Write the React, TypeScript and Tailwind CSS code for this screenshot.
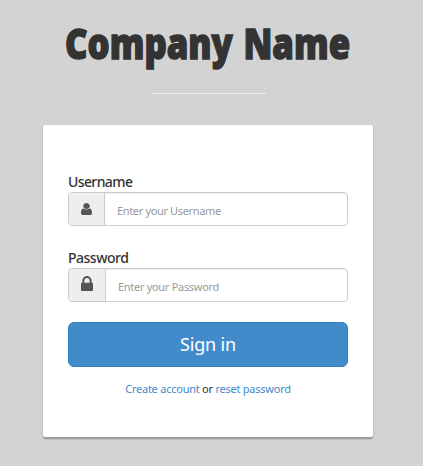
import type { ReactNode } from "react";

function UserIcon() {
  return (
    <svg className="h-[12px] w-[11px]" viewBox="256 128 1280 1536" preserveAspectRatio="none" fill="currentColor">
      <path d="M1536 1399q0 109-62.500 187t-150.500 78h-854q-88 0-150.500-78t-62.500-187q0-85 8.500-160.500t31.500-152 58.500-131 94-89 134.500-34.500q131 128 313 128t313-128q76 0 134.500 34.500t94 89 58.500 131 31.500 152 8.500 160.500zm-256-887q0 159-112.500 271.500t-271.500 112.500-271.500-112.500-112.500-271.500 112.500-271.500 271.500-112.500 271.500 112.500 112.500 271.500z" />
    </svg>
  );
}

function LockIcon() {
  return (
    <svg className="h-[15px] w-[12px]" viewBox="0 128 1152 1408" preserveAspectRatio="none" fill="currentColor">
      <path d="M320 768h512v-192q0-106-75-181t-181-75-181 75-75 181v192zm832 96v576q0 40-28 68t-68 28h-960q-40 0-68-28t-28-68v-576q0-40 28-68t68-28h32v-192q0-184 132-316t316-132 316 132 132 316v192h32q40 0 68 28t28 68z" />
    </svg>
  );
}

type FieldProps = {
  label: string;
  labelClass: string;
  type: string;
  placeholder: string;
  addonClass: string;
  inputClass: string;
  icon: ReactNode;
};

function Field({ label, labelClass, type, placeholder, addonClass, inputClass, icon }: FieldProps) {
  return (
    <label className="block">
      <span className={`block h-[20px] text-[14px] leading-[20px] font-medium text-[#333] ${labelClass}`}>{label}</span>
      <span className="flex h-[34px] overflow-hidden rounded-[4px] border border-[#ccc] bg-white">
        <span className={`flex shrink-0 items-start border-r border-[#ccc] bg-[#eee] pl-[12px] text-[#555] ${addonClass}`}>{icon}</span>
        <input
          type={type}
          placeholder={placeholder}
          className={`min-w-0 flex-1 pt-[5px] pl-[12px] text-[11px] shadow-[inset_0_1px_1px_rgba(0,0,0,0.075)] outline-none placeholder:text-[#999] ${inputClass}`}
        />
      </span>
    </label>
  );
}

export default function App() {
  return (
    <main className="flex h-[466px] w-[423px] flex-col items-center overflow-hidden bg-[#d3d3d3] pr-[7px] font-['Noto_Sans',sans-serif]">
      <h1 className="mt-[13px] h-[62px] origin-center scale-x-[0.807] font-['Open_Sans',sans-serif] text-[43px] leading-[60px] font-extrabold [word-spacing:2px] whitespace-nowrap text-[#333] [-webkit-text-stroke:1.5px_#333]">
        Company Name
      </h1>
      <hr className="mt-[18px] w-[115px] border-[#eee]" />
      <form className="mt-[31px] h-[312px] w-[330px] shrink-0 rounded-[2px] bg-white px-[25px] pt-[47px] shadow-[0_2px_2px_rgba(0,0,0,0.3)]">
        <Field
          label="Username"
          labelClass="tracking-[-0.6px]"
          type="text"
          placeholder="Enter your Username"
          addonClass="w-[36px] pt-[10px]"
          inputClass="tracking-[-0.35px]"
          icon={<UserIcon />}
        />
        <div className="mt-[22px]">
          <Field
            label="Password"
            labelClass="tracking-[-0.5px]"
            type="password"
            placeholder="Enter your Password"
            addonClass="w-[37px] pt-[7px]"
            inputClass="tracking-[-0.3px]"
            icon={<LockIcon />}
          />
        </div>
        <button type="button" className="mt-[20px] block h-[45px] w-full rounded-[6px] border border-[#357ebd] bg-[#428bca] text-[18px] leading-[43px] tracking-[-0.15px] text-white">
          Sign in
        </button>
        <p className="mt-[12px] text-center text-[11px] leading-[20px] tracking-[-0.24px] whitespace-nowrap text-[#333]">
          <a href="#" className="text-[#428bca]">Create account</a> or <a href="#" className="text-[#428bca]">reset password</a>
        </p>
      </form>
    </main>
  );
}
